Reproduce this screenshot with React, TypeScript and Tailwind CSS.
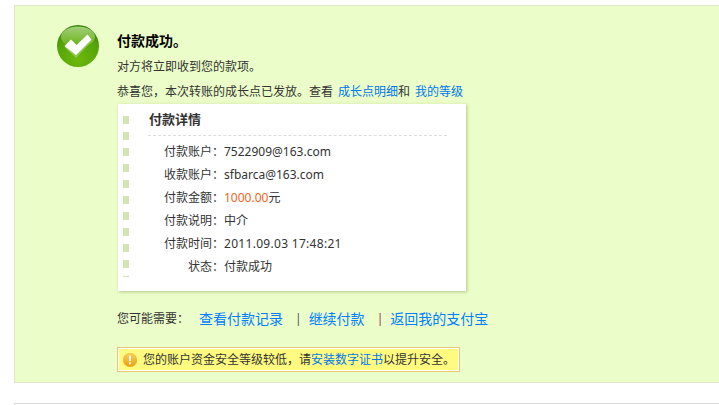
const font = "font-['Noto_Sans','Noto_Sans_CJK_SC',sans-serif]";

const rows: [string, string, boolean?][] = [
  ["付款账户：", "7522909@163.com"],
  ["收款账户：", "sfbarca@163.com"],
  ["付款金额：", "1000.00", true],
  ["付款说明：", "中介"],
  ["付款时间：", "2011.09.03 17:48:21"],
  ["状态：", "付款成功"],
];

function CheckIcon() {
  return (
    <svg width="42" height="42" viewBox="0 0 42 42" className="mt-[1px] shrink-0">
      <defs>
        <radialGradient id="g" cx="50%" cy="80%" r="75%">
          <stop offset="0%" stopColor="#6cb80e" />
          <stop offset="70%" stopColor="#55a408" />
          <stop offset="100%" stopColor="#38860a" />
        </radialGradient>
        <linearGradient id="h" x1="0" y1="0" x2="0" y2="1">
          <stop offset="0%" stopColor="#bcdf95" />
          <stop offset="100%" stopColor="#66b012" />
        </linearGradient>
      </defs>
      <circle cx="21" cy="21" r="21" fill="url(#g)" />
      <ellipse cx="21" cy="12" rx="17" ry="10.5" fill="url(#h)" opacity="0.8" />
      <path d="M7.5 22 L14 15.5 L19.5 21 L31 10 L35 16 L19 33 Z" fill="#93c653" />
      <path d="M7.5 21 L14 14.5 L19.5 20 L30.5 9.5 L34.5 14.5 L19 30 Z" fill="#ffffff" />
    </svg>
  );
}

function WarnIcon() {
  return (
    <svg width="14" height="14" viewBox="0 0 14 14" className="shrink-0">
      <defs>
        <linearGradient id="w" x1="0" y1="0" x2="0" y2="1">
          <stop offset="0%" stopColor="#fbd25a" />
          <stop offset="100%" stopColor="#ee9a0c" />
        </linearGradient>
      </defs>
      <circle cx="7" cy="7" r="6.8" fill="url(#w)" stroke="#e39a1a" strokeWidth="0.4" />
      <rect x="6" y="2.6" width="2" height="5.6" rx="0.6" fill="#ffffff" />
      <rect x="6" y="9.2" width="2" height="2" rx="0.5" fill="#ffffff" />
    </svg>
  );
}

export default function App() {
  return (
    <div className={`${font} h-[405px] w-[719px] overflow-hidden bg-white pl-[14px] pt-[5px] text-[12px] leading-[16px] text-[#333333]`}>
      <div className="flex h-[378px] w-[720px] gap-[18px] border border-[#e0e4cc] bg-[#ebfdc8] pl-[42px] pt-[18px]">
        <CheckIcon />
        <div className="flex flex-col">
          <h1 className="mt-[8px] text-[14px] font-bold leading-[18px] text-black">付款成功。</h1>
          <p className="mt-[9px]">对方将立即收到您的款项。</p>
          <p className="mt-[9px] flex">
            <span>恭喜您，本次转账的成长点已发放。查看</span>
            <a className="ml-[5px] text-[#0077ee]">成长点明细</a>
            <span>和</span>
            <a className="ml-[5px] text-[#0077ee]">我的等级</a>
          </p>

          <div className="ml-[1px] mt-[4px] flex h-[187px] w-[348px] bg-white pl-[5px] pt-[12px] shadow-[1px_1px_3px_#b4c68c]">
            <div className="flex w-[7px] shrink-0 flex-col gap-[8px] overflow-hidden">
              {[0, 1, 2, 3, 4, 5, 6, 7, 8, 9, 10].map((i) => (
                <span key={i} className={`block w-[6px] shrink-0 bg-[#d5e3b5] ${i === 10 ? "h-[1px]" : "h-[8px]"}`} />
              ))}
            </div>
            <div className="ml-[18px] w-[299px]">
              <h2 className="ml-[1px] mt-[-6px] text-[13px] font-bold leading-[18px] text-[#333333]">付款详情</h2>
              <div className="mt-[7px] border-t border-dashed border-[#dddddd]" />
              <dl className="mt-[4px]">
                {rows.map(([label, value, money]) => (
                  <div key={label} className="flex h-[23px] items-center">
                    <dt className="w-[76px] text-right">{label}</dt>
                    <dd className={value.startsWith("2011") ? "tracking-[0.3px]" : ""}>
                      {money ? (
                        <>
                          <span className="text-[#f26522]">{value}</span>元
                        </>
                      ) : (
                        value
                      )}
                    </dd>
                  </div>
                ))}
              </dl>
            </div>
          </div>

          <div className="mt-[20px] flex items-center text-[14px]">
            <span className="w-[82px] text-[12px]">您可能需要：</span>
            <a className="text-[#0080ff]">查看付款记录</a>
            <span className="ml-[12px] mr-[7px] text-[12px] text-[#555555]">|</span>
            <a className="text-[#0080ff]">继续付款</a>
            <span className="ml-[12px] mr-[7px] text-[12px] text-[#8a3a5a]">|</span>
            <a className="text-[#0080ff]">返回我的支付宝</a>
          </div>

          <div className="mt-[20px] flex h-[25px] w-[343px] items-center gap-[6px] border border-[#e8c878] bg-[#fffb80] pl-[5px] outline outline-1 -outline-offset-2 outline-white">
            <WarnIcon />
            <span>
              您的账户资金安全等级较低，请<a className="text-[#0077ee]">安装数字证书</a>以提升安全。
            </span>
          </div>
        </div>
      </div>
      <div className="mt-[20px] h-[20px] w-[720px] border-t border-l border-[#dddddd]" />
    </div>
  );
}
